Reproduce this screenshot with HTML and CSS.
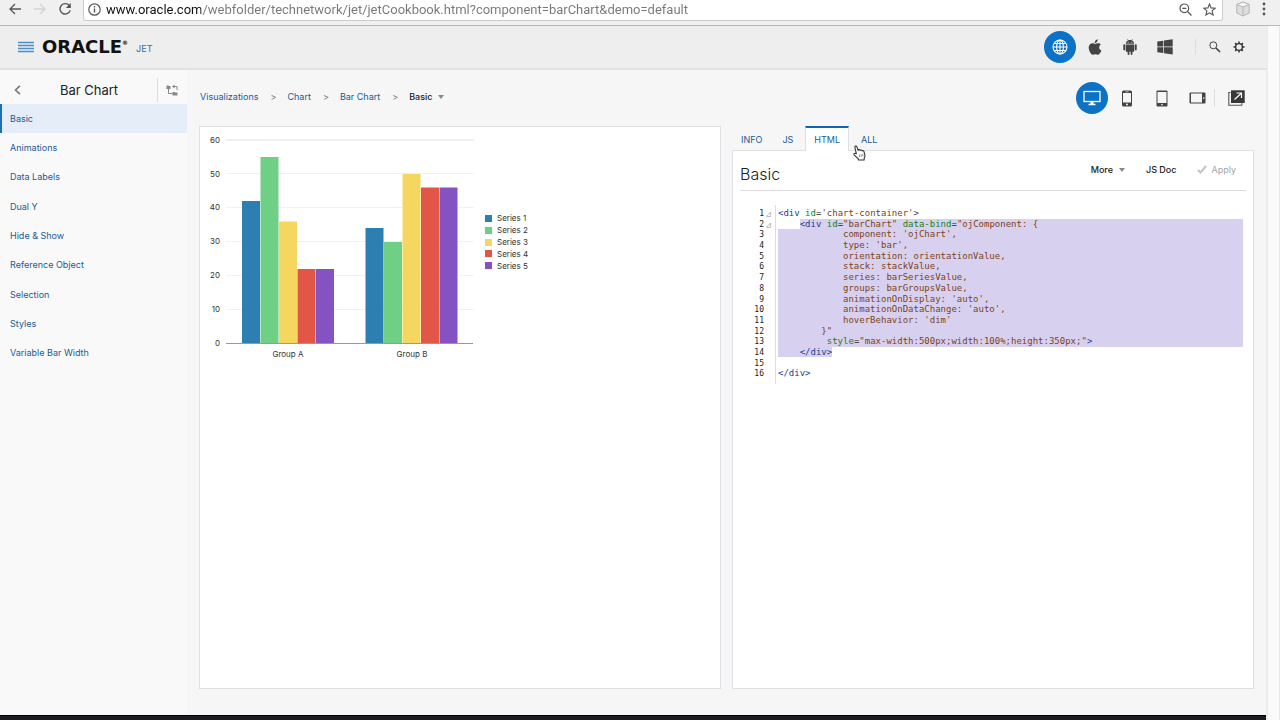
FILE: index.html
```html
<!DOCTYPE html>
<html lang="en">
<head>
  <meta charset="UTF-8" />
  <title>Oracle JET Cookbook - Bar Chart</title>
  <meta name="viewport" content="width=device-width, initial-scale=1.0" />
  <link rel="stylesheet" href="styles.css">
</head>
<body>
  <!-- Browser toolbar -->
  <div class="browser-bar">
    <button class="nav-btn" aria-label="Back">
      <svg width="14" height="14" viewBox="0 0 14 14" fill="none" stroke="#555" stroke-width="1.3"><path d="M13 7H2M7 2L2 7l5 5"/></svg>
    </button>
    <button class="nav-btn" aria-label="Forward" disabled>
      <svg width="14" height="14" viewBox="0 0 14 14" fill="none" stroke="#d2d2d2" stroke-width="1.3"><path d="M1 7h11M7 2l5 5-5 5"/></svg>
    </button>
    <button class="nav-btn" aria-label="Reload">
      <svg width="14" height="14" viewBox="0 0 14 14"><path d="M11.6 4A5.2 5.2 0 1 0 12.2 8.4" fill="none" stroke="#555" stroke-width="1.4"/><path d="M12.8 1v5H7.8z" fill="#555"/></svg>
    </button>
    <div class="address">
      <svg width="13" height="13" viewBox="0 0 13 13" fill="none" stroke="#555"><circle cx="6.5" cy="6.5" r="5.7" stroke-width="1.2"/><path d="M6.5 5.6v4M6.5 3v1.4" stroke-width="1.4"/></svg>
      <input class="url" type="text" aria-label="Address" value="www.oracle.com/webfolder/technetwork/jet/jetCookbook.html?component=barChart&amp;demo=default">
      <button class="nav-btn" aria-label="Zoom">
        <svg width="13" height="13" viewBox="0 0 13 13" fill="none" stroke="#555" stroke-width="1.2"><circle cx="5.3" cy="5.3" r="4.3"/><path d="M3.3 5.3h4M8.5 8.5l4 4"/></svg>
      </button>
      <button class="nav-btn" aria-label="Bookmark">
        <svg width="13" height="13" viewBox="0 0 13 13" fill="none" stroke="#555" stroke-width="1.1"><path d="M6.500 1L8.100 4.900l4.200.300-3.200 2.700 1 4.100-3.600-2.200L2.900 12l1-4.100L.7 5.200l4.200-.3z"/></svg>
      </button>
    </div>
    <button class="nav-btn" aria-label="Extension">
      <svg width="16" height="16" viewBox="0 0 16 16" stroke="#b5b5b5" stroke-linejoin="round"><path d="M8 1l6.200 2.500v8.500L8 15 1.800 12V3.500z" fill="#dedede"/><path d="M1.800 3.500L8 6l6.200-2.500L8 1z" fill="#f8f8f8"/><path d="M8 6v9" fill="none"/></svg>
    </button>
    <button class="nav-btn" aria-label="Menu">
      <svg width="4" height="14" viewBox="0 0 4 14" fill="#555"><circle cx="2" cy="2" r="1.400"/><circle cx="2" cy="7" r="1.400"/><circle cx="2" cy="12" r="1.400"/></svg>
    </button>
  </div>

  <div class="viewport">
    <div class="page">
      <header class="header">
        <button class="menu-btn" aria-label="Navigation">
          <svg width="16" height="12" viewBox="0 0 16 12" stroke="#4a8fd0" stroke-width="1.300"><path d="M0 1.500h16M0 4.500h16M0 7.500h16M0 10.500h16"/></svg>
        </button>
        <a class="brand" href="#">ORACLE<sup>®</sup></a>
        <span class="product">JET</span>
        <div class="platforms">
          <button class="round-btn active" aria-label="Web">
            <svg width="16" height="16" viewBox="0 0 16 16" fill="none" stroke="#fff" stroke-width="1.100"><circle cx="8" cy="8" r="7"/><ellipse cx="8" cy="8" rx="3.400" ry="7"/><path d="M8 1v14M1 8h14M2 4.500h12M2 11.500h12"/></svg>
          </button>
          <button class="round-btn" aria-label="iOS">
            <svg width="14" height="16" viewBox="0 0 14 16" fill="#444"><path d="M9.700.3c.1 1.200-.3 2.100-.9 2.800-.6.700-1.400 1.100-2.200 1-.1-1 .3-1.900.9-2.600C8.100.8 9 .4 9.700.3zM12.900 5.600c-1.100.7-1.700 1.600-1.700 2.800 0 1.300.8 2.500 2.200 3-.4 1.200-1 2.200-1.700 3.100-.6.8-1.200 1.200-2 1.200-.9 0-1.300-.5-2.400-.5s-1.500.5-2.400.5c-.8 0-1.500-.5-2.200-1.500C1.500 12.600.7 10.700.7 8.800c0-3 1.900-4.500 3.700-4.500 1.100 0 1.900.6 2.700.6s1.800-.7 3-.7c1.200 0 2.200.5 2.800 1.400z"/></svg>
          </button>
          <button class="round-btn" aria-label="Android">
            <svg width="14" height="16" viewBox="0 0 14 16" fill="#444"><path d="M2.800 4.800C2.900 3 3.900 2 5 1.500L4.200.3l.4-.2.900 1.200c1-.3 2-.3 3 0L9.400.1l.4.200L9 1.500c1.100.5 2.100 1.500 2.200 3.300z"/><path d="M2.800 5.400h8.400v6.500a.9.900 0 0 1-.9.900H9.400v2.200a.9.900 0 0 1-1.800 0v-2.200H6.400v2.200a.9.900 0 0 1-1.800 0v-2.200h-.9a.9.900 0 0 1-.9-.9z"/><rect x=".3" y="5.300" width="1.900" height="6" rx=".9"/><rect x="11.800" y="5.300" width="1.900" height="6" rx=".9"/><circle cx="5.200" cy="3.300" r=".5" fill="#eee"/><circle cx="8.800" cy="3.300" r=".5" fill="#eee"/></svg>
          </button>
          <button class="round-btn" aria-label="Windows">
            <svg width="16" height="16" viewBox="0 0 16 16" fill="#444"><path d="M.3 2.600l6-.9v5.800h-6zM7 1.600l8.700-1.300v7.200H7zM.3 8.300h6v5.800l-6-.8zM7 8.300h8.700v7.300L7 14.300z"/></svg>
          </button>
        </div>
        <div class="tools">
          <button class="icon-btn" aria-label="Search">
            <svg width="12" height="12" viewBox="0 0 12 12" fill="none" stroke="#444"><circle cx="4.300" cy="4.300" r="3.500" stroke-width="1"/><path d="M7 7l4 4" stroke-width="1.700"/></svg>
          </button>
          <button class="icon-btn" aria-label="Settings">
            <svg width="12" height="12" viewBox="0 0 12 12" fill="none" stroke="#333"><circle cx="6" cy="6" r="3.400" stroke-width="1.400"/><path d="M6 .5v2M6 9.500v2M.5 6h2M9.500 6h2M2.100 2.100l1.400 1.400M8.500 8.500l1.400 1.400M2.100 9.900l1.400-1.400M8.500 3.500l1.400-1.400" stroke-width="1.500"/></svg>
          </button>
        </div>
      </header>

      <div class="content">
        <nav class="sidebar" aria-label="Demos">
          <div class="sidebar-head">
            <button class="side-btn" aria-label="Back to components">
              <svg width="7" height="10" viewBox="0 0 7 10" fill="none" stroke="#777" stroke-width="1.600"><path d="M6 .8L1.500 5 6 9.200"/></svg>
            </button>
            <h1>Bar Chart</h1>
            <button class="side-btn tree" aria-label="Tree view">
              <svg width="12" height="12" viewBox="0 0 12 12" fill="#888"><path d="M.5 1.500h2l.5.5h1.500v3h-4zM6.500 8h2l.5.500h2.500v3h-5z"/><path d="M2.500 5v4.500h4M11 6V2.500H7.500" fill="none" stroke="#888"/><path d="M6 2.500l2.500-2v4z"/></svg>
            </button>
          </div>
          <ul class="demo-list">
            <li class="selected"><a href="#">Basic</a></li>
            <li><a href="#">Animations</a></li>
            <li><a href="#">Data Labels</a></li>
            <li><a href="#">Dual Y</a></li>
            <li><a href="#">Hide &amp; Show</a></li>
            <li><a href="#">Reference Object</a></li>
            <li><a href="#">Selection</a></li>
            <li><a href="#">Styles</a></li>
            <li><a href="#">Variable Bar Width</a></li>
          </ul>
        </nav>

        <main class="main">
          <div class="toolbar">
            <div class="crumbs">
              <a href="#">Visualizations</a><span class="sep">&gt;</span>
              <a href="#">Chart</a><span class="sep">&gt;</span>
              <a href="#">Bar Chart</a><span class="sep">&gt;</span>
              <button class="text-btn">Basic<span class="caret"></span></button>
            </div>
            <div class="devices">
              <button class="round-btn active" aria-label="Desktop">
                <svg width="18" height="16" viewBox="0 0 18 16" fill="none" stroke="#fff"><rect x="1" y="1.500" width="16" height="10" stroke-width="1.300"/><path d="M9 12v2" stroke-width="3"/><path d="M5.500 14.500h7" stroke-width="1.500"/></svg>
              </button>
              <button class="round-btn" aria-label="Phone">
                <svg width="12" height="17" viewBox="0 0 12 17"><rect x="1" y=".5" width="10" height="16" rx="1.500" fill="#444"/><rect x="2" y="3" width="8" height="9.500" fill="#f6f6f6"/><path d="M4.500 1.800h3" stroke="#ddd" stroke-width=".8"/><circle cx="6" cy="14.500" r=".9" fill="#fff"/></svg>
              </button>
              <button class="round-btn" aria-label="Tablet portrait">
                <svg width="12" height="17" viewBox="0 0 12 17"><rect x=".5" y=".5" width="11" height="16" rx="1" fill="#444"/><rect x="1.500" y="2" width="9" height="11" fill="#f6f6f6"/><circle cx="6" cy="14.800" r=".8" fill="#fff"/></svg>
              </button>
              <button class="round-btn" aria-label="Tablet landscape">
                <svg width="17" height="12" viewBox="0 0 17 12"><rect x=".5" y=".5" width="16" height="11" rx="1" fill="#444"/><rect x="2" y="1.500" width="11" height="9" fill="#f6f6f6"/><circle cx="14.800" cy="6" r=".8" fill="#fff"/></svg>
              </button>
            </div>
            <button class="open-btn" aria-label="Open in new window">
              <svg width="17" height="16" viewBox="0 0 17 16"><path d="M2.500 2.500H.8v12.700h13v-2" fill="none" stroke="#555" stroke-width="1.100"/><rect x="3" y=".3" width="13.700" height="12.700" fill="#383838"/><path d="M6.500 9.500l6.500-6M8.500 3H13.500v5" fill="none" stroke="#fff" stroke-width="1.200"/></svg>
            </button>
          </div>

          <div class="panels">
            <section class="chart-panel" aria-label="Bar chart">
              <svg class="chart" width="350" height="250" viewBox="200 127 350 250">
                <g class="grid">
                  <path class="grid-top" d="M226 140h248"/>
                  <path d="M226 173.500h248M226 207.500h248M226 241.500h248M226 275.500h248M226 309.500h248"/>
                </g>
                <g class="axis-y">
                  <text x="220" y="143">60</text>
                  <text x="220" y="177">50</text>
                  <text x="220" y="210">40</text>
                  <text x="220" y="244">30</text>
                  <text x="220" y="278">20</text>
                  <text x="220" y="312">10</text>
                  <text x="220" y="346">0</text>
                </g>
                <!-- Group A -->
                <rect class="s1" x="242" y="201" width="18" height="142"/>
                <rect class="s2" x="260.500" y="157" width="18" height="186"/>
                <rect class="s3" x="279" y="221.500" width="18" height="121.500"/>
                <rect class="s4" x="297.500" y="269" width="18" height="74"/>
                <rect class="s5" x="316" y="269" width="18" height="74"/>
                <!-- Group B -->
                <rect class="s1" x="365.500" y="228" width="18" height="115"/>
                <rect class="s2" x="384" y="242" width="18" height="101"/>
                <rect class="s3" x="402.500" y="174" width="18" height="169"/>
                <rect class="s4" x="421" y="187.500" width="18" height="155.500"/>
                <rect class="s5" x="439.500" y="187.500" width="18" height="155.500"/>
                <path class="baseline" d="M226 343.500h247"/>
                <g class="axis-x">
                  <text x="288" y="357">Group A</text>
                  <text x="412" y="357">Group B</text>
                </g>
                <g class="legend">
                  <rect class="s1" x="485" y="215" width="7" height="7"/><text x="497" y="221">Series 1</text>
                  <rect class="s2" x="485" y="227" width="7" height="7"/><text x="497" y="233">Series 2</text>
                  <rect class="s3" x="485" y="239" width="7" height="7"/><text x="497" y="245">Series 3</text>
                  <rect class="s4" x="485" y="250" width="7" height="7"/><text x="497" y="257">Series 4</text>
                  <rect class="s5" x="485" y="262" width="7" height="7"/><text x="497" y="269">Series 5</text>
                </g>
              </svg>
            </section>

            <section class="source">
              <div class="tabs" role="tablist">
                <button class="tab" role="tab">INFO</button>
                <button class="tab" role="tab">JS</button>
                <button class="tab current" role="tab" aria-selected="true">HTML
                  <svg class="pointer" width="13" height="16" viewBox="0 0 13 16"><path d="M3.300 8.600L1.900 2.500C1.600 1 3.400.5 3.900 1.900l1.200 3.300c.5-.9 1.700-.7 2 .1.700-.6 1.700-.3 2 .5.800-.4 1.700 0 1.900.8l.9 3.500c.3 1.400-.2 2.300-.7 3.200l-.1 1.700H5.500l-.4-1.400-3.800-3.500c-1-1 .2-2.300 1.200-1.600z" fill="#fff" stroke="#333" stroke-width="1.100"/><path d="M6.200 9.500l.4 2.500M8 9.200l.4 2.500M9.700 9l.3 2.400" stroke="#777" stroke-width=".8"/></svg>
                </button>
                <button class="tab" role="tab">ALL</button>
              </div>
              <div class="card">
                <div class="card-head">
                  <h2>Basic</h2>
                  <button class="text-btn">More<span class="caret"></span></button>
                  <a class="text-btn" href="#">JS Doc</a>
                  <button class="text-btn" disabled><svg width="10" height="9" viewBox="0 0 10 9" fill="none" stroke="#c4c4c4" stroke-width="2"><path d="M1 5l2.500 2.500L9 1"/></svg>Apply</button>
                </div>
                <ol class="code">
                  <li class="fold"><code><b>&lt;div</b> <i>id</i>=<q>'chart-container'</q><b>&gt;</b></code></li>
                  <li class="fold sel-start"><code><span>    </span><span class="sel"><b>&lt;div</b> <i>id</i>=<q>"barChart"</q> <i>data-bind</i>=<q>"ojComponent: {</q></span></code></li>
                  <li class="sel"><code>            <q>component: 'ojChart',</q></code></li>
                  <li class="sel"><code>            <q>type: 'bar',</q></code></li>
                  <li class="sel"><code>            <q>orientation: orientationValue,</q></code></li>
                  <li class="sel"><code>            <q>stack: stackValue,</q></code></li>
                  <li class="sel"><code>            <q>series: barSeriesValue,</q></code></li>
                  <li class="sel"><code>            <q>groups: barGroupsValue,</q></code></li>
                  <li class="sel"><code>            <q>animationOnDisplay: 'auto',</q></code></li>
                  <li class="sel"><code>            <q>animationOnDataChange: 'auto',</q></code></li>
                  <li class="sel"><code>            <q>hoverBehavior: 'dim'</q></code></li>
                  <li class="sel"><code>        <q>}"</q></code></li>
                  <li class="sel"><code>         <i>style</i>=<q>"max-width:500px;width:100%;height:350px;"</q><b>&gt;</b></code></li>
                  <li><code><span class="sel">    <b>&lt;/div&gt;</b></span></code></li>
                  <li><code></code></li>
                  <li><code><b>&lt;/div&gt;</b></code></li>
                </ol>
              </div>
            </section>
          </div>
        </main>
      </div>
      <div class="footer-strip"></div>
    </div>
    <div class="scrollbar"></div>
  </div>
</body>
</html>
```
FILE: styles.css
```css
* {
  margin: 0;
  padding: 0;
  box-sizing: border-box;
}
body {
  height: 100vh;
  display: flex;
  flex-direction: column;
  overflow: hidden;
  font-family: Inter, Roboto, sans-serif;
  font-size: 9px;
  line-height: 12px;
  color: #222;
  background: #f6f6f6;
}
button {
  font: inherit;
  color: inherit;
  border: 0;
  background: none;
  cursor: pointer;
}
svg {
  display: block;
  flex: none;
}
a {
  color: #1b5a97;
  text-decoration: none;
}
ul, ol {
  list-style: none;
}

/* Browser toolbar */
.browser-bar {
  flex: none;
  height: 26px;
  display: flex;
  align-items: flex-start;
  gap: 11px;
  padding: 0 14px 0 8px;
  background: #f0f0f0;
  border-bottom: 1px solid #b8b8b8;
}
.nav-btn {
  height: 18px;
  display: flex;
  align-items: center;
}
.address {
  flex: 1;
  height: 21px;
  display: flex;
  align-items: flex-start;
  gap: 11px;
  margin-right: 1px;
  padding: 0 6px 0 4px;
  background: #fff;
  border: 1px solid #ccc;
  border-top: 0;
  border-radius: 0 0 3px 3px;
}
.address > svg {
  margin-top: 3px;
}
.url {
  flex: 1;
  height: 18px;
  margin-left: -6px;
  border: 0;
  outline: 0;
  font-family: Roboto, sans-serif;
  font-size: 13px;
  color: transparent;
  /* host part is darker than the path */
  background: linear-gradient(90deg, #111 95px, #777 95px);
  -webkit-background-clip: text;
  background-clip: text;
}

.viewport {
  flex: 1;
  min-height: 0;
  display: flex;
}
.page {
  flex: 1;
  display: flex;
  flex-direction: column;
}
.scrollbar {
  width: 14px;
  background: #fafafa;
  border-left: 2px solid #ececec;
  border-right: 1px solid #e8e8e8;
}
.footer-strip {
  height: 5px;
  background: #1d1c21;
  border-top: 1px solid #000;
}

/* Header */
.header {
  height: 44px;
  display: flex;
  align-items: center;
  padding: 0 21px 0 18px;
  background: #eee;
  border-bottom: 2px solid #e0e0e0;
}
.brand {
  margin-left: 8px;
  font-family: "DejaVu Sans", sans-serif;
  font-size: 18px;
  font-weight: bold;
  line-height: 20px;
  color: #111;
}
.brand sup {
  font-size: 6px;
  line-height: 6px;
  vertical-align: 8px;
}
.product {
  margin: 4px 0 0 8px;
  color: #2f6ea8;
}
.platforms,
.devices {
  display: flex;
  gap: 3px;
}
.platforms {
  margin-left: auto;
}
.round-btn {
  width: 32px;
  height: 32px;
  display: flex;
  align-items: center;
  justify-content: center;
  border-radius: 50%;
}
.round-btn.active {
  background: #0b72c6;
}
.tools {
  display: flex;
  gap: 12px;
  margin-left: 14px;
  padding-left: 13px;
  border-left: 1px solid #ddd;
}
.icon-btn {
  height: 16px;
  display: flex;
  align-items: center;
}

/* Sidebar */
.content {
  flex: 1;
  min-height: 0;
  display: flex;
}
.sidebar {
  width: 187px;
  background: #f9f9f9;
}
.sidebar-head {
  height: 34px;
  display: flex;
  align-items: center;
  padding-top: 6px;
}
.sidebar-head h1 {
  flex: 1;
  padding-right: 8px;
  text-align: center;
  font-size: 13px;
  font-weight: 400;
}
.side-btn {
  height: 24px;
  display: flex;
  align-items: center;
  padding: 0 8px 0 14px;
}
.side-btn.tree {
  padding: 0 9px 0 8px;
  border-left: 1px solid #ddd;
}
.demo-list {
  height: 264px;
  display: flex;
  flex-direction: column;
}
.demo-list li {
  flex: 1;
  display: flex;
  align-items: center;
  padding-left: 10px;
}
.demo-list .selected {
  background: #e5edf9;
  box-shadow: inset 2px 0 #1a6fc0;
}

/* Main area */
.main {
  flex: 1;
  display: flex;
  flex-direction: column;
  padding: 0 12px 26px;
}
.toolbar {
  height: 56px;
  display: flex;
  align-items: center;
}
.crumbs {
  display: flex;
  align-items: center;
  padding: 0 0 2px 1px;
}
.sep {
  margin: 0 11px 0 12px;
  color: #777;
}
.text-btn {
  display: flex;
  align-items: center;
  font-weight: 500;
  color: #222;
}
.text-btn:disabled {
  gap: 4px;
  font-weight: 400;
  color: #a5a5a5;
}
.caret {
  margin-left: 6px;
  border: 3px solid transparent;
  border-top: 4px solid #888;
  border-bottom: 0;
}
.devices {
  margin-left: auto;
}
.open-btn {
  height: 18px;
  display: flex;
  align-items: center;
  margin-left: 1px;
  padding: 0 9px 0 13px;
  border-left: 1px solid #ddd;
}
.panels {
  flex: 1;
  display: grid;
  grid-template-columns: 1fr 1fr;
  gap: 11px;
}
.chart-panel,
.card {
  background: #fff;
  border: 1px solid #dfe0e3;
}

/* Chart */
.chart text {
  font-size: 8px;
  fill: #333;
}
.grid path {
  stroke: #f1f1f1;
}
.grid .grid-top {
  stroke-width: 2;
}
.axis-y {
  text-anchor: end;
}
.axis-x {
  text-anchor: middle;
}
.baseline {
  stroke: #999;
}
.s1 { fill: #2d7eb1; }
.s2 { fill: #6fcf85; }
.s3 { fill: #f5d65f; }
.s4 { fill: #e15647; }
.s5 { fill: #8453c1; }

/* Source panel */
.source {
  display: flex;
  flex-direction: column;
}
.tabs {
  display: flex;
  height: 24px;
  margin-left: -1px;
}
.tab {
  position: relative;
  padding: 3px 10px 0;
  color: #1b5a97;
}
.tab.current {
  margin: 0 2px -1px;
  padding: 0 8px;
  background: #fff;
  border: 1px solid #dfe0e3;
  border-top: 2px solid #0b67b2;
  border-bottom: 0;
}
.pointer {
  position: absolute;
  left: 47px;
  top: 17px;
  z-index: 1;
}
.card {
  flex: 1;
  padding: 0 7px;
}
.card-head {
  height: 40px;
  display: flex;
  align-items: center;
  gap: 21px;
  padding: 0 10px 2px 0;
  border-bottom: 1px solid #ddd;
}
.card-head h2 {
  flex: 1;
  padding-top: 8px;
  font-size: 16px;
  font-weight: 300;
  line-height: 20px;
}

/* Code editor */
.code {
  height: 179px;
  margin: 14px 3px 0 0;
  padding: 3px 0 5px;
  display: flex;
  flex-direction: column;
  counter-reset: line;
  font-family: "DejaVu Sans Mono", monospace;
  line-height: 11px;
  /* gutter line */
  background: linear-gradient(#ddd, #ddd) 35px 0 / 1px 100% no-repeat;
}
.code li {
  flex: 1;
  min-height: 0;
  display: flex;
  counter-increment: line;
}
.code li::before {
  content: counter(line);
  width: 24px;
  text-align: right;
  font-size: 8px;
}
.code li::after {
  content: "";
  order: 1;
  flex: none;
  box-sizing: border-box;
  width: 14px;
  padding-left: 2px;
}
.code li.fold::after {
  content: "◿";
  font-size: 8px;
  color: #888;
}
.code code {
  order: 2;
  flex: 1;
  font-family: inherit;
  white-space: pre;
}
.code b {
  font-weight: 400;
  color: #22408f;
}
.code i {
  font-style: normal;
  color: #178017;
}
.code q {
  quotes: none;
  color: #7c4220;
}
.code li.sel code,
.code span.sel {
  background: #d7d1ef;
}
.code li.sel-start code {
  display: flex;
}
.code li.sel-start .sel {
  flex: 1;
}
```
